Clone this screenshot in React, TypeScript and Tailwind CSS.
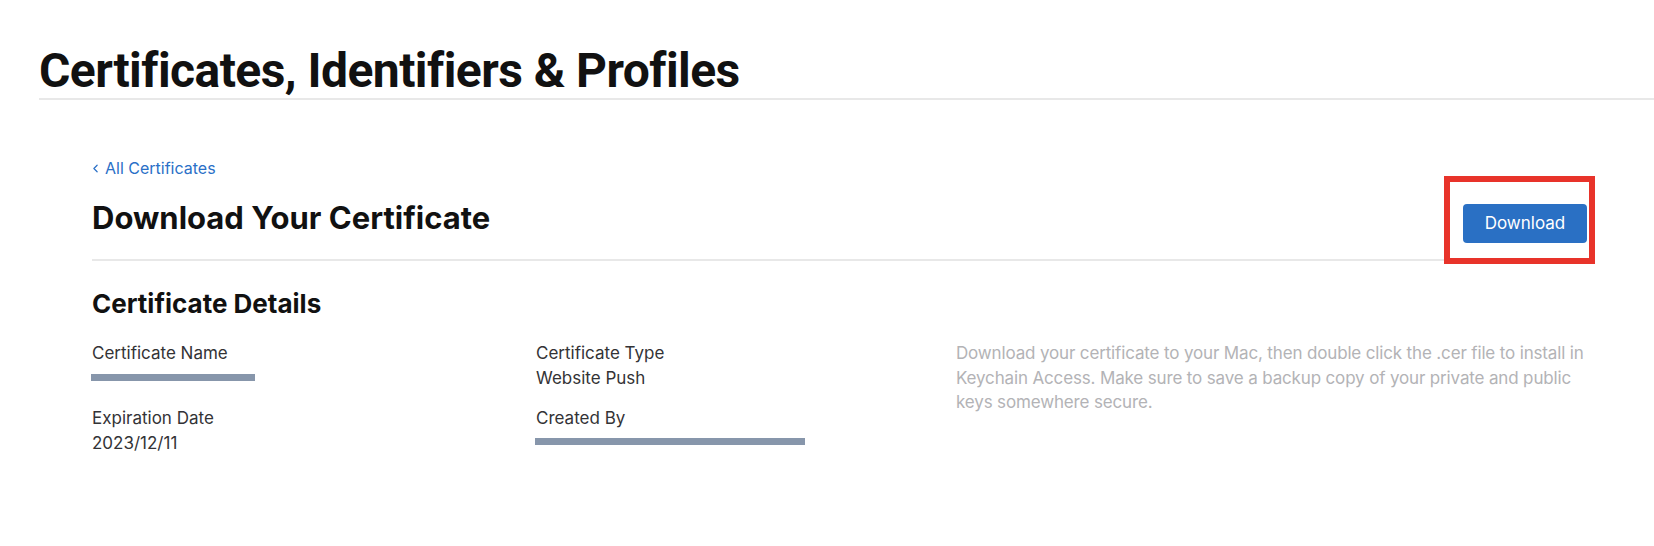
import { ChevronLeft } from 'lucide-react';

const font = { fontFamily: 'Inter, "Noto Sans", sans-serif' };

const Field = ({ label, value, redact, barTop }: { label: string; value?: string; redact?: number; barTop?: number }) => (
  <div className="flex flex-col">
    <span className="text-[17px] leading-[24.5px] text-[#333336]">{label}</span>
    {redact ? (
      <div className="h-[24.5px] relative">
        <div className="absolute left-[-1px] h-[7px] bg-[#8796ab]" style={{ width: redact, top: barTop }} />
      </div>
    ) : (
      <span className="text-[17px] leading-[24.5px] text-[#333336]">{value}</span>
    )}
  </div>
);

export default function App() {
  return (
    <div className="min-h-[546px] w-[1654px] bg-white" style={font}>
      <header className="pl-[39px] pt-[45px]">
        <h1
          className="text-[48px] leading-[52px] font-bold tracking-[-0.55px] text-[#111111] pb-[1px] border-b-2 border-[#e8e8e8]"
          style={{ fontFamily: 'Roboto, "Liberation Sans", sans-serif' }}
        >
          Certificates, Identifiers &amp; Profiles
        </h1>
      </header>

      <main className="pl-[92px] pr-[67px] pt-[57px]">
        <a className="flex items-center gap-[3px] text-[16px] leading-[22px] text-[#2a70c7]">
          <ChevronLeft size={13} strokeWidth={2.25} className="-ml-[3px]" />
          All Certificates
        </a>

        <div className="relative flex items-start justify-between border-b-2 border-[#e8e8e8] pt-[19px] pb-[16px]">
          <h2 className="text-[31px] leading-[40px] font-bold text-[#111111]">Download Your Certificate</h2>
          <button className="mt-[6px] h-[39px] w-[124px] rounded-[4px] bg-[#2a70c4] text-[17px] text-white">Download</button>
          <div className="absolute -right-[8px] -top-[3px] h-[88px] w-[151px] border-[6px] border-[#e8332a]" />
        </div>

        <h3 className="mt-[27px] text-[26px] leading-[32px] font-bold text-[#111111]">Certificate Details</h3>

        <div className="mt-[21px] grid grid-cols-[444px_420px_1fr]">
          <div className="flex flex-col gap-[16px]">
            <Field label="Certificate Name" redact={164} barTop={8} />
            <Field label="Expiration Date" value="2023/12/11" />
          </div>
          <div className="flex flex-col gap-[16px]">
            <Field label="Certificate Type" value="Website Push" />
            <Field label="Created By" redact={270} barTop={7} />
          </div>
          <p className="text-[17px] leading-[24.5px] tracking-[-0.15px] text-[#b3b3b6]">
            Download your certificate to your Mac, then double click the .cer file to install in Keychain Access. Make sure to save a backup copy of your private and public keys somewhere secure.
          </p>
        </div>
      </main>
    </div>
  );
}
